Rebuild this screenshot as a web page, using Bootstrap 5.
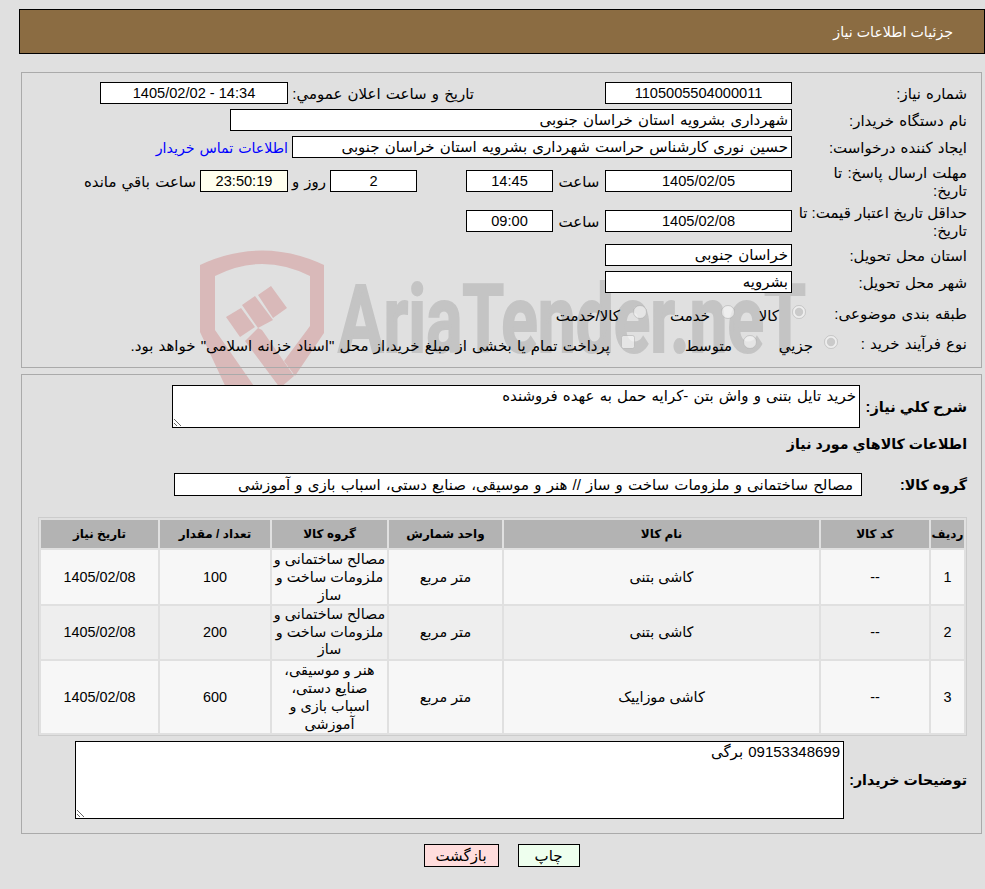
<!DOCTYPE html>
<html lang="fa" dir="rtl">
<head>
<meta charset="utf-8">
<title>جزئیات اطلاعات نیاز</title>
<link href="https://cdn.jsdelivr.net/npm/bootstrap@5.3.0/dist/css/bootstrap.min.css" rel="stylesheet">
<style>
html,body{background:#e0e0e0;}
body{margin:0;height:889px;overflow:hidden;position:relative;font-family:"Liberation Sans","DejaVu Sans",sans-serif;font-size:15px;line-height:18px;color:#000;word-spacing:1px;}
.wm{position:absolute;left:0;top:0;width:985px;height:889px;pointer-events:none;direction:ltr;}
.wm text{font-family:"Roboto",sans-serif;font-weight:700;fill:#c4c4c4;stroke:#c4c4c4;stroke-width:2px;direction:ltr;word-spacing:0;}
.pagebox{position:relative;}
.hdrw{padding-left:19px;}
.hdr{margin-top:9px;height:45px;background:#8b6c42;border:1px solid #000;color:#fff;font-size:14.2px;padding-right:31px;word-spacing:0;}
.pan{border:1px solid #aaa;margin-left:21px;margin-right:3px;}
.pan1{margin-top:18px;height:296px;padding:9px 14px 0 0;}
.pan2{margin-top:6px;height:460px;padding:10px 14px 0 14px;}
.frow{height:22px;margin-bottom:5px;}
.frow.tall{height:34px;margin-bottom:6px;}
.frow.opt{height:20px;margin-bottom:10px;}
.frow.before-tall{margin-bottom:6px;}
.frow.before-opt{margin-bottom:9px;}
.lbl{width:175px;flex:none;line-height:18px;padding-top:2px;}
.lbl.tight-l{word-spacing:0;white-space:nowrap;}
.lbl2{width:161px;flex:none;padding-top:4px;}
.lbl3{width:129px;flex:none;padding-top:4px;}
.fld.form-control{display:block;height:22px;min-height:0;border:1px solid #000;border-radius:0;padding:0 3px;font-size:15px;line-height:20px;color:#000;background:#fff;box-shadow:none;flex:none;font-family:inherit;word-spacing:1px;}
.fld.form-control.num{font-size:14.6px;word-spacing:0;}
.w187{width:187px;}
.w188{width:188px;}
.w562{width:562px;}
.w500{width:500px;}
.w87{width:87px;}
.w88{width:88px;}
.fld.form-control.timer{background:#ffe;}
.pub-l{width:186px;flex:none;margin-right:131px;padding-top:2px;}
.gap52{width:52px;flex:none;text-align:center;padding-top:2px;}
.gap49{width:49px;flex:none;}
.gap42{width:42px;flex:none;text-align:center;padding-top:2px;}
.remain-l{padding-top:2px;}
.opt-i{flex:none;display:flex;align-items:center;}
.w71{width:71px;}
.w88b{width:88px;}
.w81{width:81px;}
.w122{width:122px;}
.opt-i input{width:14px;height:14px;margin:0 0 0 11px;flex:none;}
.opt-i input.far-g{margin-left:13px;}
.opt-i label{margin-top:7px;white-space:nowrap;}
.bold-t{font-weight:700;font-size:14.2px;word-spacing:0;}
.bold-t.big-t{font-size:14.6px;}
.desc-l{width:107px;flex:none;}
.ta.form-control{border:1px solid #000;border-radius:0;background:#fff;padding:1px 3px;font-size:15px;line-height:18px;color:#000;box-shadow:none;min-height:0;font-family:inherit;flex:none;word-spacing:1px;}
.ta1{width:688px;height:43px;}
.ta2{width:769px;height:78px;}
.heading-r{height:22px;margin-top:5px;}
.grp-r{margin-top:18px;height:23px;}
.grp-l{width:105px;flex:none;}
.grp-b{width:688px;height:23px;border:1px solid #000;background:#fff;padding:0 8px;line-height:21px;flex:none;white-space:nowrap;overflow:hidden;}
.goods{width:929px;table-layout:fixed;border-collapse:separate;border-spacing:2px;border:1px solid #ccc;margin-top:21px;font-size:14.4px;line-height:18px;word-spacing:0;}
.goods th{background:#b3b3b3;height:28px;font-weight:700;text-align:center;vertical-align:middle;padding:0;font-size:12px;word-spacing:0;}
.goods td{text-align:center;vertical-align:middle;padding:0 1px;background:#f7f7f7;}
.goods tr.row-alt td{background:#eee;}
.goods tr.rh-a td{height:54px;}
.goods tr.rh-b td{height:53px;line-height:17.6px;}
.goods tr.rh-c td{height:72px;}
.note-r{margin-top:5px;}
.note-l{width:123px;flex:none;}
.actions{margin-top:10px;margin-left:18px;gap:19px;}
.btn.ac{border:1px solid #000;border-radius:0;height:23px;padding:0;font-size:15px;line-height:21px;color:#000;}
.btn.back-b{width:75px;background:#fdd;}
.btn.print-b{width:62px;background:#efe;}
a.cl{color:#00f;text-decoration:none;font-size:14.2px;padding-top:2px;}
</style>
</head>
<body>
<svg class="wm" viewBox="0 0 985 889" aria-hidden="true">
  <path fill="#d9b9b9" fill-rule="evenodd" d="M200 265Q262 236 324 265V333L295 376L284 361L310 326V276Q262 252 215 276V330L258 392H228L200 332Z"/>
  <path fill="#d9b9b9" d="M226 317L241 308L255 327L240 337ZM242 305L255 296L273 320L258 328L262 330L294 376L280 388L245 341L258 328ZM258 295L271 286L287 308L273 318Z"/>
  <text x="338" y="352" font-size="94" textLength="468" lengthAdjust="spacingAndGlyphs">AriaTender.neT</text>
</svg>
<div class="pagebox">
  <div class="hdrw"><div class="hdr d-flex align-items-center">جزئیات اطلاعات نیاز</div></div>

  <div class="pan pan1">
    <div class="frow d-flex align-items-center">
      <div class="lbl">شماره نیاز:</div>
      <input class="form-control fld w187 text-center num" readonly value="1105005504000011">
      <div class="pub-l">تاریخ و ساعت اعلان عمومي:</div>
      <input class="form-control fld w188 text-center num" dir="ltr" readonly value="1405/02/02 - 14:34">
    </div>
    <div class="frow d-flex align-items-center">
      <div class="lbl">نام دستگاه خریدار:</div>
      <input class="form-control fld w562" readonly value="شهرداری بشرویه استان خراسان جنوبی">
    </div>
    <div class="frow before-tall d-flex align-items-center">
      <div class="lbl">ایجاد کننده درخواست:</div>
      <input class="form-control fld w500" readonly value="حسین نوری کارشناس حراست شهرداری بشرویه استان خراسان جنوبی">
      <a class="cl me-1" href="#">اطلاعات تماس خریدار</a>
    </div>
    <div class="frow tall d-flex align-items-center">
      <div class="lbl">مهلت ارسال پاسخ: تا<br>تاریخ:</div>
      <input class="form-control fld w187 text-center num" readonly value="1405/02/05">
      <div class="gap52">ساعت</div>
      <input class="form-control fld w87 text-center num" readonly value="14:45">
      <div class="gap49"></div>
      <input class="form-control fld w87 text-center num" readonly value="2">
      <div class="gap42">روز و</div>
      <input class="form-control fld w88 timer text-center num" readonly value="23:50:19">
      <div class="me-1 remain-l">ساعت باقي مانده</div>
    </div>
    <div class="frow tall d-flex align-items-center">
      <div class="lbl tight-l">حداقل تاریخ اعتبار قیمت: تا<br>تاریخ:</div>
      <input class="form-control fld w187 text-center num" readonly value="1405/02/08">
      <div class="gap52">ساعت</div>
      <input class="form-control fld w87 text-center num" readonly value="09:00">
    </div>
    <div class="frow d-flex align-items-center">
      <div class="lbl">استان محل تحویل:</div>
      <input class="form-control fld w187" readonly value="خراسان جنوبی">
    </div>
    <div class="frow before-opt d-flex align-items-center">
      <div class="lbl">شهر محل تحویل:</div>
      <input class="form-control fld w187" readonly value="بشرویه">
    </div>
    <div class="frow opt d-flex align-items-center">
      <div class="lbl2">طبقه بندی موضوعی:</div>
      <div class="opt-i w71"><input class="far-g" type="radio" name="t1" disabled checked><label>کالا</label></div>
      <div class="opt-i w88b"><input type="radio" name="t1" disabled><label>خدمت</label></div>
      <div class="opt-i"><input class="far-g" type="radio" name="t1" disabled><label>کالا/خدمت</label></div>
    </div>
    <div class="frow opt d-flex align-items-center">
      <div class="lbl3">نوع فرآیند خرید :</div>
      <div class="opt-i w81"><input type="radio" name="t2" disabled checked><label>جزيي</label></div>
      <div class="opt-i w122"><input type="radio" name="t2" disabled><label>متوسط</label></div>
      <div class="opt-i"><input type="checkbox" disabled><label>پرداخت تمام یا بخشی از مبلغ خرید،از محل "اسناد خزانه اسلامی" خواهد بود.</label></div>
    </div>
  </div>

  <div class="pan pan2">
    <div class="d-flex align-items-center">
      <div class="desc-l bold-t big-t">شرح کلي نياز:</div>
      <textarea class="form-control ta ta1" readonly>خرید تایل بتنی و واش بتن -کرایه حمل به عهده فروشنده</textarea>
    </div>
    <div class="heading-r d-flex align-items-center bold-t">اطلاعات کالاهاي مورد نیاز</div>
    <div class="grp-r d-flex align-items-center">
      <div class="grp-l bold-t">گروه کالا:</div>
      <div class="grp-b">مصالح ساختمانی و ملزومات ساخت و ساز // هنر و موسیقی، صنایع دستی، اسباب بازی و آموزشی</div>
    </div>
    <table class="goods">
      <colgroup><col style="width:33px"><col style="width:108px"><col style="width:315px"><col style="width:113px"><col style="width:115px"><col style="width:110px"><col style="width:117px"></colgroup>
      <thead><tr><th>ردیف</th><th>کد کالا</th><th>نام کالا</th><th>واحد شمارش</th><th>گروه کالا</th><th>تعداد / مقدار</th><th>تاریخ نیاز</th></tr></thead>
      <tbody>
        <tr class="rh-a"><td>1</td><td>--</td><td>کاشی بتنی</td><td>متر مربع</td><td>مصالح ساختمانی و ملزومات ساخت و ساز</td><td>100</td><td>1405/02/08</td></tr>
        <tr class="rh-b row-alt"><td>2</td><td>--</td><td>کاشی بتنی</td><td>متر مربع</td><td>مصالح ساختمانی و ملزومات ساخت و ساز</td><td>200</td><td>1405/02/08</td></tr>
        <tr class="rh-c"><td>3</td><td>--</td><td>کاشی موزاییک</td><td>متر مربع</td><td>هنر و موسیقی، صنایع دستی، اسباب بازی و آموزشی</td><td>600</td><td>1405/02/08</td></tr>
      </tbody>
    </table>
    <div class="note-r d-flex align-items-center">
      <div class="note-l bold-t">توضیحات خریدار:</div>
      <textarea class="form-control ta ta2" readonly>09153348699 برگی</textarea>
    </div>
  </div>

  <div class="actions d-flex justify-content-center">
    <button type="button" class="btn ac print-b">چاپ</button>
    <button type="button" class="btn ac back-b">بازگشت</button>
  </div>
</div>
</body>
</html>
